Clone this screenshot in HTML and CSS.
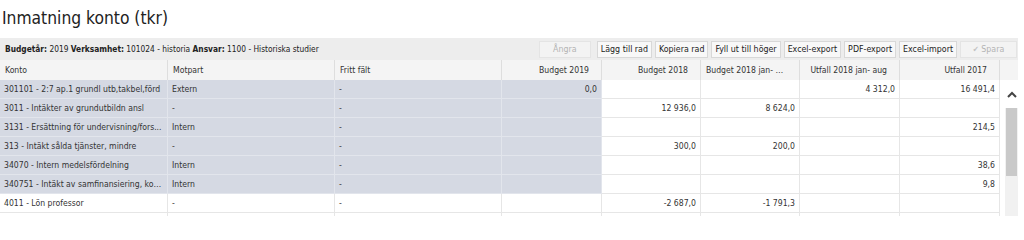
FILE: index.html
```html
<!DOCTYPE html>
<html lang="sv">
<head>
<meta charset="utf-8">
<title>Inmatning konto (tkr)</title>
<link rel="stylesheet" href="styles.css">
</head>
<body>
<h1 class="title">Inmatning konto (tkr)</h1>
<div class="panel">
  <div class="toolbar">
    <div class="info"><b>Budgetår:</b> 2019 <b>Verksamhet:</b> 101024 - historia <b>Ansvar:</b> 1100 - Historiska studier</div>
    <div class="buttons">
      <button class="btn btn-undo" disabled>Ångra</button>
      <button class="btn">Lägg till rad</button>
      <button class="btn">Kopiera rad</button>
      <button class="btn">Fyll ut till höger</button>
      <button class="btn">Excel-export</button>
      <button class="btn">PDF-export</button>
      <button class="btn">Excel-import</button>
      <button class="btn btn-save" disabled><span class="check">✔</span> Spara</button>
    </div>
  </div>
  <div class="head">
    <div class="hc">Konto</div>
    <div class="hc">Motpart</div>
    <div class="hc">Fritt fält</div>
    <div class="hc num">Budget 2019</div>
    <div class="hc num">Budget 2018</div>
    <div class="hc num">Budget 2018 jan- aug</div>
    <div class="hc num">Utfall 2018 jan- aug</div>
    <div class="hc num">Utfall 2017</div>
    <div class="hc end"></div>
  </div>
  <div class="body">
    <div class="rows">
      <div class="c lk">301101 - 2:7 ap.1 grundl utb,takbel,förd</div><div class="c lk">Extern</div><div class="c lk">-</div><div class="c lk num">0,0</div><div class="c num"></div><div class="c num"></div><div class="c num">4 312,0</div><div class="c num">16 491,4</div>
      <div class="c lk">3011 - Intäkter av grundutbildn ansl</div><div class="c lk">-</div><div class="c lk">-</div><div class="c lk num"></div><div class="c num">12 936,0</div><div class="c num">8 624,0</div><div class="c num"></div><div class="c num"></div>
      <div class="c lk">3131 - Ersättning för undervisning/fors...</div><div class="c lk">Intern</div><div class="c lk">-</div><div class="c lk num"></div><div class="c num"></div><div class="c num"></div><div class="c num"></div><div class="c num">214,5</div>
      <div class="c lk">313 - Intäkt sålda tjänster, mindre</div><div class="c lk">-</div><div class="c lk">-</div><div class="c lk num"></div><div class="c num">300,0</div><div class="c num">200,0</div><div class="c num"></div><div class="c num"></div>
      <div class="c lk">34070 - Intern medelsfördelning</div><div class="c lk">Intern</div><div class="c lk">-</div><div class="c lk num"></div><div class="c num"></div><div class="c num"></div><div class="c num"></div><div class="c num">38,6</div>
      <div class="c lk">340751 - Intäkt av samfinansiering, kos...</div><div class="c lk">Intern</div><div class="c lk">-</div><div class="c lk num"></div><div class="c num"></div><div class="c num"></div><div class="c num"></div><div class="c num">9,8</div>
      <div class="c">4011 - Lön professor</div><div class="c">-</div><div class="c">-</div><div class="c num"></div><div class="c num">-2 687,0</div><div class="c num">-1 791,3</div><div class="c num"></div><div class="c num"></div>
      <div class="c"></div><div class="c"></div><div class="c"></div><div class="c"></div><div class="c"></div><div class="c"></div><div class="c"></div><div class="c"></div>
    </div>
    <div class="scroll">
      <div class="arrow">
        <svg width="10" height="7" viewBox="0 0 10 7"><path d="M1 6 L5 2 L9 6" fill="none" stroke="#444" stroke-width="2"/></svg>
      </div>
      <div class="thumb"></div>
    </div>
  </div>
</div>
</body>
</html>
```
FILE: styles.css
```css
html, body {
  margin: 0;
  padding: 0;
  background: #ffffff;
  overflow: hidden;
}
body {
  font-family: "DejaVu Sans Condensed", "DejaVu Sans", sans-serif;
  color: #333333;
}
.title {
  margin: 0;
  height: 38px;
  box-sizing: border-box;
  padding: 7px 0 0 2px;
  font-size: 17.3px;
  line-height: 22px;
  font-weight: normal;
  color: #222222;
}
.panel {
  width: 1018px;
}
.toolbar {
  height: 22px;
  background: #ededed;
  display: flex;
  align-items: center;
  padding: 0 1px 0 5px;
}
.info {
  flex: 1;
  white-space: nowrap;
  color: #222222;
  font-size: 8.3px;
}
.info b {
  font-weight: bold;
}
.buttons {
  display: flex;
  gap: 3px;
}
.btn {
  height: 17px;
  box-sizing: border-box;
  border: 1px solid #d8d8d8;
  background: #f8f8f8;
  font-family: "DejaVu Sans Condensed", "DejaVu Sans", sans-serif;
  font-size: 8.8px;
  color: #222222;
  padding: 0 3px;
  min-width: 52px;
  white-space: nowrap;
  line-height: 15px;
}
.btn:disabled {
  color: #b4b4b4;
  background: #f3f3f3;
  border-color: #e4e4e4;
}
.btn-undo {
  width: 52px;
  margin-right: 3px;
}
.btn-save {
  width: 57px;
}
.check {
  color: #c2c2c2;
  font-size: 8px;
}
.head {
  display: grid;
  grid-template-columns: 168px 167px 167px 100px 99px 99px 100px 100px 18px;
  height: 20px;
  background: #f4f4f4;
  font-size: 8.6px;
}
.hc {
  border-right: 1px solid #dedede;
  padding: 0 5px;
  line-height: 20px;
  white-space: nowrap;
  overflow: hidden;
  text-overflow: ellipsis;
  color: #333333;
}
.hc.num {
  text-align: right;
  padding-right: 12px;
}
.hc.end {
  border-right: none;
}
.body {
  display: flex;
  height: 136px;
  overflow: hidden;
}
.rows {
  display: grid;
  grid-template-columns: 168px 167px 167px 100px 99px 99px 100px 100px;
  grid-auto-rows: 19px;
  width: 1000px;
  align-content: start;
}
.c {
  box-sizing: border-box;
  border-right: 1px solid #e6e6e6;
  border-bottom: 1px solid #e6e6e6;
  padding: 0 4px;
  line-height: 19px;
  font-size: 8.6px;
  white-space: nowrap;
  overflow: hidden;
  text-overflow: ellipsis;
  color: #333333;
}
.c.num {
  text-align: right;
}
.c.lk {
  background: #d5d9e3;
  border-color: #e2e5ec;
}
.scroll {
  margin-left: 5px;
  width: 13px;
  background: #f1f1f1;
  display: flex;
  flex-direction: column;
  align-items: center;
}
.arrow {
  height: 28px;
  width: 13px;
  display: flex;
  align-items: center;
  justify-content: center;
  background: #ffffff;
}
.thumb {
  width: 11px;
  height: 68px;
  background: #c9c9c9;
}
```
